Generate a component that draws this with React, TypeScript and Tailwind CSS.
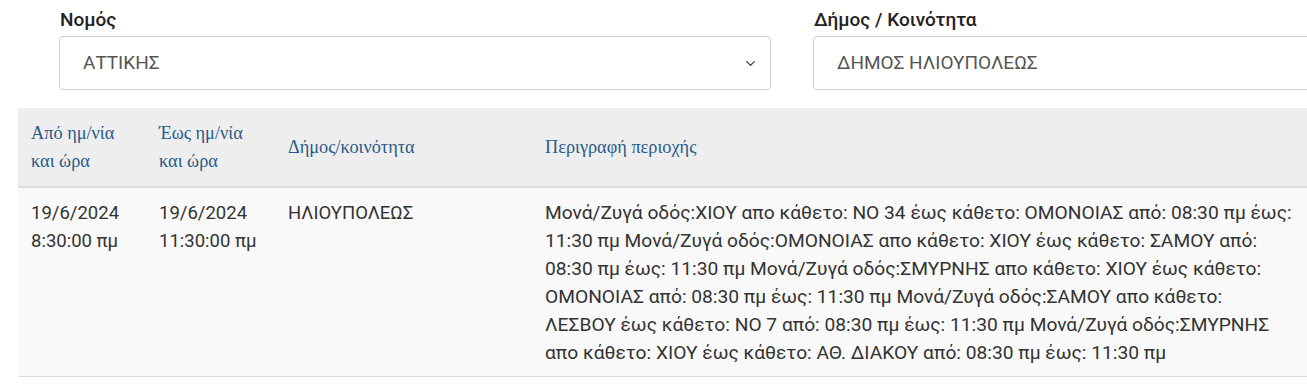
import { ChevronDown } from "lucide-react"

const description =
"Μονά/Ζυγά οδός:ΧΙΟΥ απο κάθετο: ΝΟ 34 έως κάθετο: ΟΜΟΝΟΙΑΣ από: 08:30 πμ έως: 11:30 πμ Μονά/Ζυγά οδός:ΟΜΟΝΟΙΑΣ απο κάθετο: ΧΙΟΥ έως κάθετο: ΣΑΜΟΥ από: 08:30 πμ έως: 11:30 πμ Μονά/Ζυγά οδός:ΣΜΥΡΝΗΣ απο κάθετο: ΧΙΟΥ έως κάθετο: ΟΜΟΝΟΙΑΣ από: 08:30 πμ έως: 11:30 πμ Μονά/Ζυγά οδός:ΣΑΜΟΥ απο κάθετο: ΛΕΣΒΟΥ έως κάθετο: ΝΟ 7 από: 08:30 πμ έως: 11:30 πμ Μονά/Ζυγά οδός:ΣΜΥΡΝΗΣ απο κάθετο: ΧΙΟΥ έως κάθετο: ΑΘ. ΔΙΑΚΟΥ από: 08:30 πμ έως: 11:30 πμ"

export default function App(){

return(

<div className="w-[1307px] h-[388px] overflow-hidden bg-white font-['Roboto',sans-serif] text-[#333]">

{/* FILTERS */}

<div className="flex gap-[42px] pl-[59px] pt-[8px]">

<div className="w-[712px] shrink-0">
<label className="block text-[19px] font-medium leading-[24px] text-[#222] pl-px">Νομός</label>
<div className="mt-[4px] h-[54px] flex items-center justify-between border border-[#cfcfcf] rounded-[4px] pl-[23px] pr-[12px]">
<span className="text-[19px] text-[#555]">ΑΤΤΙΚΗΣ</span>
<ChevronDown size={15} strokeWidth={2.2} className="text-[#444]"/>
</div>
</div>

<div className="w-[712px] shrink-0">
<label className="block text-[19px] font-medium leading-[24px] text-[#222] pl-px">Δήμος / Κοινότητα</label>
<div className="mt-[4px] h-[54px] flex items-center border border-[#cfcfcf] rounded-[4px] pl-[23px] pr-[12px]">
<span className="text-[19px] text-[#555]">ΔΗΜΟΣ ΗΛΙΟΥΠΟΛΕΩΣ</span>
</div>
</div>

</div>

{/* TABLE */}

<div className="ml-[18px] mt-[18px]">

<table className="table-fixed w-[1300px] border-collapse">

<colgroup>
<col className="w-[128px]"/>
<col className="w-[129px]"/>
<col className="w-[257px]"/>
<col/>
</colgroup>

<thead>
<tr className="bg-[#eeeeee] border-b-2 border-[#dddddd] h-[79px]">
<th className="text-left font-normal align-middle px-[13px] font-['Liberation_Serif',serif] text-[18.3px] leading-[28px] text-[#2a5b8a]">Από ημ/νία<br/>και ώρα</th>
<th className="text-left font-normal align-middle px-[13px] font-['Liberation_Serif',serif] text-[18.3px] leading-[28px] text-[#2a5b8a]">Έως ημ/νία<br/>και ώρα</th>
<th className="text-left font-normal align-middle px-[13px] font-['Liberation_Serif',serif] text-[18.3px] leading-[28px] text-[#2a5b8a]">Δήμος/κοινότητα</th>
<th className="text-left font-normal align-middle pl-[13px] pr-[26px] font-['Liberation_Serif',serif] text-[18.3px] leading-[28px] text-[#2a5b8a]">Περιγραφή περιοχής</th>
</tr>
</thead>

<tbody>
<tr className="bg-[#f9f9f9] border-b border-[#dddddd]">
<td className="align-top px-[13px] pt-[11px] pb-[9px] text-[18.5px] leading-[28px]">19/6/2024<br/>8:30:00 πμ</td>
<td className="align-top px-[13px] pt-[11px] pb-[9px] text-[18.5px] leading-[28px]">19/6/2024<br/>11:30:00 πμ</td>
<td className="align-top px-[13px] pt-[11px] pb-[9px] text-[18.5px] leading-[28px]">ΗΛΙΟΥΠΟΛΕΩΣ</td>
<td className="align-top pl-[13px] pr-[26px] pt-[11px] pb-[9px] text-[19.2px] leading-[28px]">{description}</td>
</tr>
</tbody>

</table>

</div>

</div>

)

}
